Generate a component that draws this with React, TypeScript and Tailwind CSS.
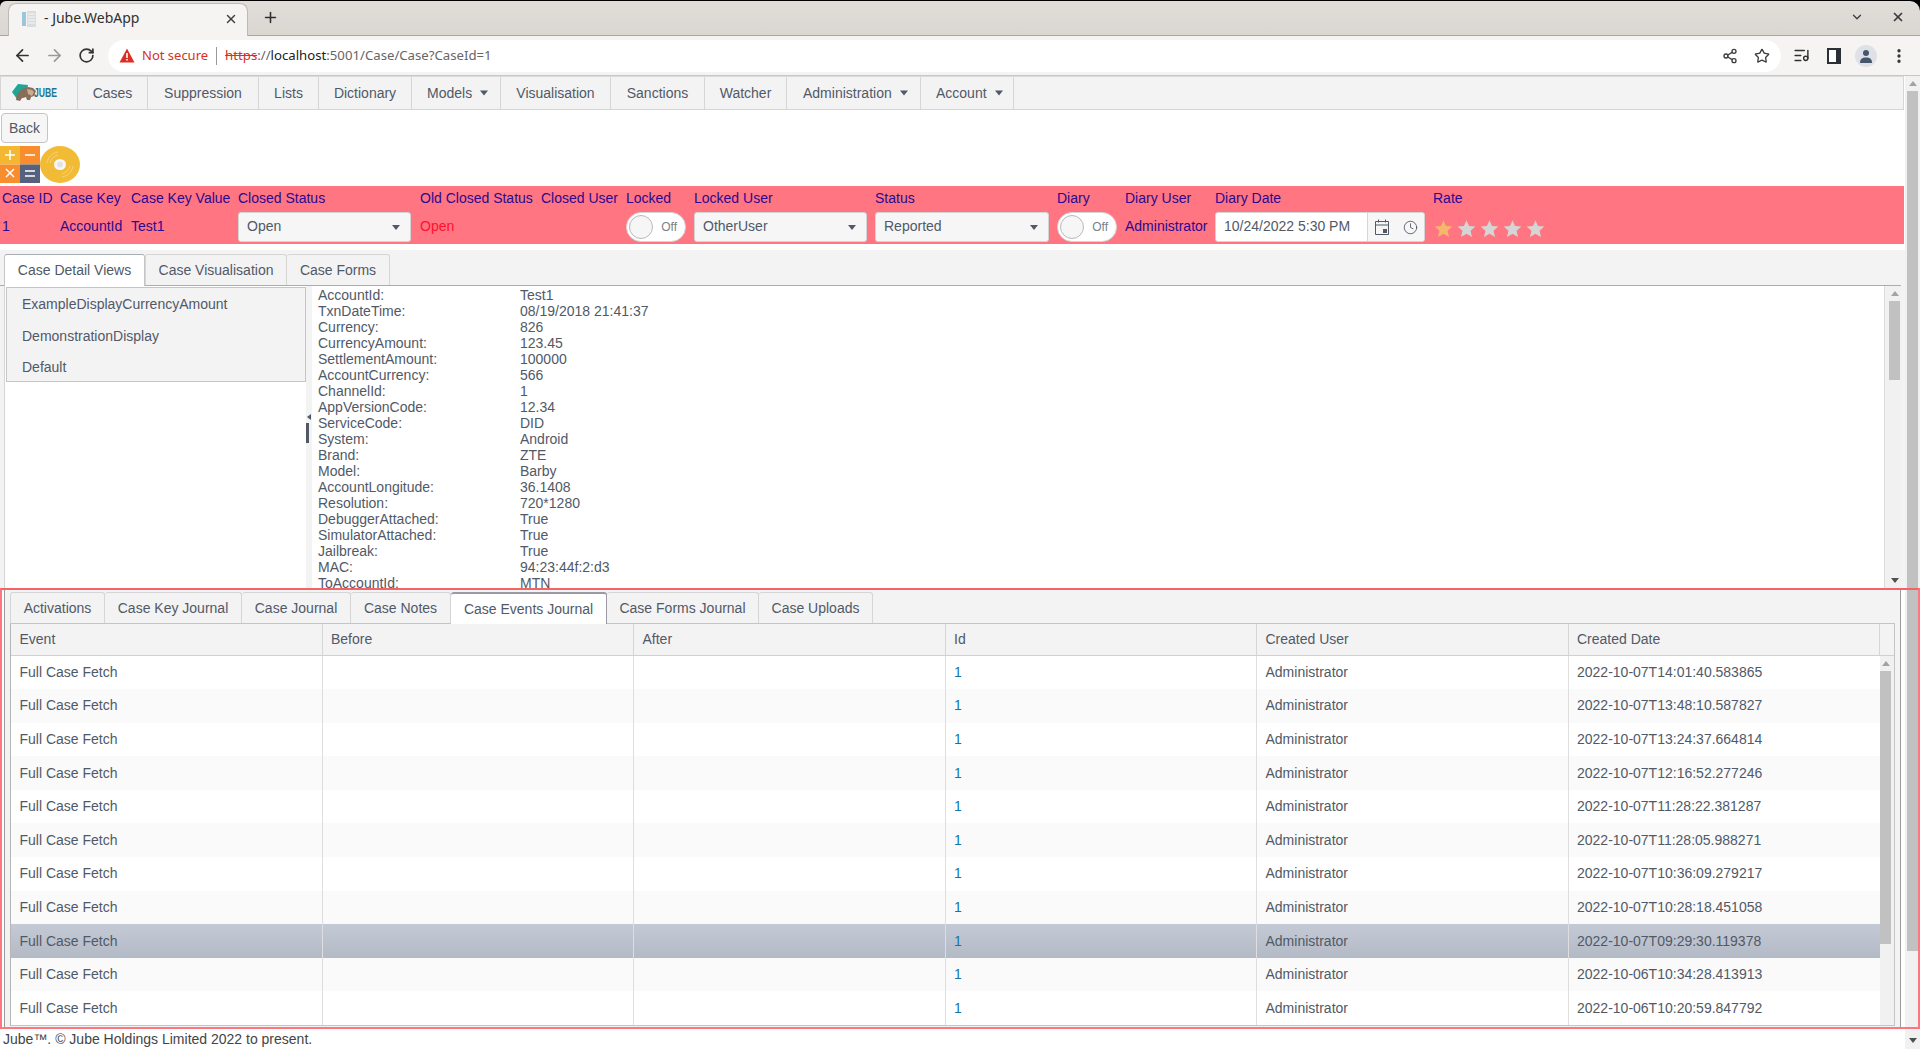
import React from "react";
import { ArrowLeft, ArrowRight, RotateCw, Share2, Star, ListMusic, EllipsisVertical, ChevronDown, X, Plus, Clock } from "lucide-react";

const Caret = ({ c = "#515967", w = 8, h = 5 }: { c?: string; w?: number; h?: number }) => (
  <svg width={w} height={h} viewBox="0 0 8 5" className="shrink-0"><path d="M0 0h8L4 5z" fill={c} /></svg>
);

const UpArrow = () => (
  <svg width="8" height="5" viewBox="0 0 8 5"><path d="M0 5h8L4 0z" fill="#a3a3a3" /></svg>
);

const DownArrow = () => (
  <svg width="8" height="5" viewBox="0 0 8 5"><path d="M0 0h8L4 5z" fill="#505050" /></svg>
);

const navItems: { t: string; w: number; caret?: boolean }[] = [
  { t: "Cases", w: 70 },
  { t: "Suppression", w: 111 },
  { t: "Lists", w: 60 },
  { t: "Dictionary", w: 93 },
  { t: "Models", w: 89, caret: true },
  { t: "Visualisation", w: 110 },
  { t: "Sanctions", w: 94 },
  { t: "Watcher", w: 82 },
  { t: "Administration", w: 134, caret: true },
  { t: "Account", w: 93, caret: true },
];

const details: [string, string][] = [
  ["AccountId:", "Test1"],
  ["TxnDateTime:", "08/19/2018 21:41:37"],
  ["Currency:", "826"],
  ["CurrencyAmount:", "123.45"],
  ["SettlementAmount:", "100000"],
  ["AccountCurrency:", "566"],
  ["ChannelId:", "1"],
  ["AppVersionCode:", "12.34"],
  ["ServiceCode:", "DID"],
  ["System:", "Android"],
  ["Brand:", "ZTE"],
  ["Model:", "Barby"],
  ["AccountLongitude:", "36.1408"],
  ["Resolution:", "720*1280"],
  ["DebuggerAttached:", "True"],
  ["SimulatorAttached:", "True"],
  ["Jailbreak:", "True"],
  ["MAC:", "94:23:44f:2:d3"],
  ["ToAccountId:", "MTN"],
];

const dates = [
  "2022-10-07T14:01:40.583865",
  "2022-10-07T13:48:10.587827",
  "2022-10-07T13:24:37.664814",
  "2022-10-07T12:16:52.277246",
  "2022-10-07T11:28:22.381287",
  "2022-10-07T11:28:05.988271",
  "2022-10-07T10:36:09.279217",
  "2022-10-07T10:28:18.451058",
  "2022-10-07T09:29:30.119378",
  "2022-10-06T10:34:28.413913",
  "2022-10-06T10:20:59.847792",
];

const bottomTabs: [string, number][] = [
  ["Activations", 95],
  ["Case Key Journal", 137],
  ["Case Journal", 109],
  ["Case Notes", 100],
  ["Case Events Journal", 156],
  ["Case Forms Journal", 152],
  ["Case Uploads", 114],
];

const Select = ({ v, w }: { v: string; w: string }) => (
  <div className={`${w} h-[30px] flex items-center justify-between pl-2 pr-[10px] bg-[#f6f6f6] border border-[#d5d5d5] rounded-[3px] text-[#515967]`}>
    <span className="-mt-[2px]">{v}</span>
    <Caret />
  </div>
);

const Toggle = () => (
  <div className="w-[60px] h-[30px] flex items-center justify-between pl-[2px] pr-2 bg-white border border-[#d5d5d5] rounded-full text-[12px] text-[#7a7f88]">
    <div className="w-[24px] h-[24px] rounded-full bg-[#f6f6f6] border border-[#b9b9b9]" />
    <span>Off</span>
  </div>
);

const Lbl = ({ children }: { children: React.ReactNode }) => (
  <div className="h-[24px] flex items-center text-[#2b0a8f] whitespace-nowrap">{children}</div>
);

const Val = ({ children, red }: { children?: React.ReactNode; red?: boolean }) => (
  <div className={`h-[34px] flex items-center pb-[1px] whitespace-nowrap ${red ? "text-[#ff1030]" : "text-[#2b0a8f]"}`}>{children}</div>
);

const Col = ({ w, label, children }: { w: string; label: string; children?: React.ReactNode }) => (
  <div className={`${w} shrink-0 flex flex-col`}>
    <Lbl>{label}</Lbl>
    {children}
  </div>
);

export default function App() {
  return (
    <div className="relative w-[1920px] h-[1049px] overflow-hidden bg-white flex flex-col text-[14px] text-[#515967] font-['Liberation_Sans',sans-serif]">
      {/* browser chrome */}
      <div className="h-[76px] shrink-0 flex flex-col bg-black font-['Noto_Sans',sans-serif]">
        <div className="h-[35px] mt-px shrink-0 flex items-end rounded-tr-[10px] rounded-tl-[6px] bg-gradient-to-b from-[#e1deda] to-[#dad7d1] border-b border-[#a9a69f] pl-2">
          <div className="w-[240px] h-[33px] -mb-px bg-[#f5f4f2] rounded-t-[8px] border border-b-0 border-[#bdbab4] flex items-center pl-[12px] pr-[9px] text-[#303030] text-[14px]">
            <svg width="16" height="16" viewBox="0 0 16 16" className="mr-[7px] shrink-0 -mt-[3px]">
              <rect x="1" y="1" width="4" height="14" fill="#9cc6dc" />
              <rect x="6" y="0" width="9" height="16" fill="#d9dde0" />
              <path d="M7 3h7M7 6h7M7 9h7M7 12h7" stroke="#f5f5f5" strokeWidth="1" />
            </svg>
            <span className="flex-1 whitespace-nowrap -mt-[6px]">- Jube.WebApp</span>
            <X size={14} strokeWidth={2.4} color="#3c3c3c" className="-mt-[3px]" />
          </div>
          <div className="w-[44px] h-[33px] flex items-center justify-center">
            <Plus size={17} strokeWidth={2.2} color="#303030" className="-mt-[3px]" />
          </div>
          <div className="flex-1" />
          <div className="h-[33px] flex items-center gap-[27px] pr-[15px]">
            <ChevronDown size={14} strokeWidth={2.2} color="#3c3c3c" className="-mt-[3px]" />
            <X size={14} strokeWidth={3} color="#3c3c3c" className="-mt-[3px]" />
          </div>
        </div>
        <div className="flex-1 bg-[#f5f4f2] flex items-center border-b border-[#c9c5c9] pl-[13px] pr-[12px]">
          <ArrowLeft size={19} strokeWidth={2.2} color="#333" />
          <ArrowRight size={19} strokeWidth={2.2} color="#9a9a9a" className="ml-[13px]" />
          <RotateCw size={17} strokeWidth={2.4} color="#333" className="ml-[14px]" />
          <div className="ml-[13px] w-[1673px] h-[32px] bg-white rounded-full flex items-center pl-[11px] pr-[11px]">
            <svg width="16" height="15" viewBox="0 0 16 15" className="shrink-0">
              <path d="M8 0.500L15.500 14.500H0.500z" fill="#d93025" />
              <path d="M7.200 5h1.600v5H7.200zM7.200 11h1.600v1.600H7.200z" fill="#fff" />
            </svg>
            <span className="ml-[7px] text-[#d93025] text-[13px] whitespace-nowrap">Not secure</span>
            <div className="mx-[8px] w-px h-[18px] bg-[#9a9a9a]" />
            <span className="text-[13.2px] whitespace-nowrap text-[#666]">
              <span className="line-through text-[#d93025]">https</span>://<span className="text-[#202020]">localhost</span>:5001/Case/Case?CaseId=1
            </span>
            <div className="flex-1" />
            <Share2 size={16} strokeWidth={2} color="#3c3c3c" />
            <Star size={16} strokeWidth={2} color="#3c3c3c" className="ml-[16px]" />
          </div>
          <ListMusic size={17} strokeWidth={2} color="#303030" className="ml-[12px]" />
          <svg width="14" height="16" viewBox="0 0 14 16" className="ml-[17px]">
            <rect width="14" height="16" fill="#2b3036" />
            <rect x="2" y="2" width="7" height="12" fill="#fff" />
          </svg>
          <div className="ml-[14px] w-[22px] h-[22px] rounded-full bg-[#dfe1e6] flex items-center justify-center">
            <svg width="14" height="14" viewBox="0 0 14 14">
              <circle cx="7" cy="4" r="3" fill="#46566b" />
              <path d="M1 14c0-4 2-5.500 6-5.500s6 1.500 6 5.500z" fill="#46566b" />
            </svg>
          </div>
          <EllipsisVertical size={18} strokeWidth={2.4} color="#333" className="ml-[13px]" />
        </div>
      </div>

      <div className="flex-1 min-h-0 flex">
        {/* page */}
        <div className="w-[1905px] shrink-0 flex flex-col">
          {/* nav */}
          <div className="h-[34px] shrink-0 flex bg-[#f3f3f4] border border-t-[#dcdcdc] border-[#d5d5d5] mr-px">
            <div className="w-[77px] shrink-0 border-r border-[#d5d5d5] flex items-center pl-[10px]">
              <svg width="26" height="20" viewBox="0 0 26 20" className="shrink-0">
                <path d="M1 9L7 1l10 1-2 12-9 2z" fill="#1fa696" />
                <path d="M5 17l1-6 5-5 6-2 5 1 3 3-2 5-3 1-1 3h-3l-1-3-4 1-2 3z" fill="#8a6d57" />
                <path d="M16 6l5 1 2 2-2 4-4-2z" fill="#c9ad92" />
              </svg>
              <span className="-ml-[3px] text-[12px] font-bold text-[#23758d] scale-x-[0.72] origin-left leading-none">JUBE</span>
            </div>
            {navItems.map((n) => (
              <div
                key={n.t}
                style={{ width: n.w }}
                className={`shrink-0 border-r border-[#d5d5d5] flex items-center gap-[8px] whitespace-nowrap ${n.caret ? (n.t === "Administration" ? "pl-[16px]" : "pl-[15px]") : "justify-center"}`}
              >
                {n.t}
                {n.caret && <Caret w={8} h={6} />}
              </div>
            ))}
          </div>

          {/* back */}
          <div className="pt-[3px] pl-px shrink-0">
            <div className="w-[47px] h-[30px] flex items-center justify-center bg-[#f6f6f6] border border-[#c5c5c5] rounded-[4px]">Back</div>
          </div>

          {/* icons */}
          <div className="h-[37px] mt-[3px] shrink-0 flex">
            <svg width="40" height="37" viewBox="0 0 40 37">
              <rect width="20" height="18.500" fill="#f4b731" />
              <rect x="20" width="20" height="18.500" fill="#f78d2d" />
              <rect y="18.500" width="20" height="18.500" fill="#f78d2d" />
              <rect x="20" y="18.500" width="20" height="18.500" fill="#56627d" />
              <path d="M5 9h10M10 4v10M25 9h10M6 23l8 8M14 23l-8 8M25 25h10M25 30h10" stroke="#fff" strokeWidth="1.500" />
            </svg>
            <svg width="40" height="37" viewBox="0 0 40 37">
              <ellipse cx="20" cy="18.500" rx="20" ry="18.500" fill="#f2bb36" />
              <path d="M7 17c1-6 5-10 11-11M10 17c1-4 4-7 8-8M33 20c-1 6-5 10-11 11M30 20c-1 4-4 7-8 8" stroke="#f7d27a" strokeWidth="1" fill="none" />
              <ellipse cx="20" cy="18.500" rx="6" ry="5.500" fill="#f7f7f7" />
              <ellipse cx="20" cy="18.500" rx="3" ry="3" fill="#e3e3e3" />
            </svg>
          </div>

          {/* pink */}
          <div className="h-[58px] mt-[3px] shrink-0 bg-[#ff7581] flex pl-[2px] mr-px">
            <Col w="w-[58px]" label="Case ID"><Val>1</Val></Col>
            <Col w="w-[71px]" label="Case Key"><Val>AccountId</Val></Col>
            <Col w="w-[107px]" label="Case Key Value"><Val>Test1</Val></Col>
            <Col w="w-[182px]" label="Closed Status"><div className="pt-[2px]"><Select v="Open" w="w-[173px]" /></div></Col>
            <Col w="w-[121px]" label="Old Closed Status"><Val red>Open</Val></Col>
            <Col w="w-[85px]" label="Closed User"><Val /></Col>
            <Col w="w-[68px]" label="Locked"><div className="pt-[2px]"><Toggle /></div></Col>
            <Col w="w-[181px]" label="Locked User"><div className="pt-[2px]"><Select v="OtherUser" w="w-[173px]" /></div></Col>
            <Col w="w-[182px]" label="Status"><div className="pt-[2px]"><Select v="Reported" w="w-[174px]" /></div></Col>
            <Col w="w-[68px]" label="Diary"><div className="pt-[2px]"><Toggle /></div></Col>
            <Col w="w-[90px]" label="Diary User"><Val>Administrator</Val></Col>
            <Col w="w-[218px]" label="Diary Date">
              <div className="mt-[2px] w-[210px] h-[30px] flex bg-white border border-[#d5d5d5] rounded-[3px]">
                <div className="w-[152px] flex items-center pl-2 border-r border-[#d5d5d5] whitespace-nowrap"><span className="-mt-[2px]">10/24/2022 5:30 PM</span></div>
                <div className="flex-1 bg-[#f6f6f6] flex items-center pl-[7px] gap-[14px] rounded-r-[3px]">
                  <svg width="14" height="16" viewBox="0 0 14 16">
                    <path d="M.5 2.500h13v13H.5zM.5 6h13M3.500 .5v3M10.500 .5v3" stroke="#515967" strokeWidth="1" fill="none" />
                    <rect x="8" y="10" width="4" height="4" fill="#515967" />
                  </svg>
                  <Clock size={15} strokeWidth={1.4} color="#515967" />
                </div>
              </div>
            </Col>
            <Col w="w-[200px]" label="Rate">
              <div className="flex pt-[9px] pl-[1px] gap-[4px]">
                {[0, 1, 2, 3, 4].map((i) => (
                  <svg key={i} width="19" height="19" viewBox="0 0 24 24">
                    <path d="M12 1.500l3.200 7.400 8 .7-6.100 5.300 1.900 7.900L12 18.600l-7 4.200 1.900-7.900L.8 9.600l8-.7z" fill={i === 0 ? "#f4b76c" : "#d5d5d5"} />
                  </svg>
                ))}
              </div>
            </Col>
          </div>

          {/* top tabs panel */}
          <div className="h-[338px] mt-[6px] shrink-0 flex flex-col bg-[#f3f3f4]">
            <div className="h-[36px] shrink-0 flex items-end pl-[4px] border-b border-[#a9abb5] mr-[4px]">
              <div className="w-[141px] h-[32px] -mb-px flex items-center justify-center bg-white border border-b-0 border-[#c5c5c5] border-t-[#a9abb5] rounded-t-[3px]">Case Detail Views</div>
              <div className="w-[142px] h-[31px] flex items-center justify-center border border-b-0 border-[#d5d5d5] rounded-t-[3px]">Case Visualisation</div>
              <div className="w-[103px] h-[31px] flex items-center justify-center border border-b-0 border-l-0 border-[#d5d5d5] rounded-t-[3px]">Case Forms</div>
            </div>
            <div className="flex-1 min-h-0 flex bg-white ml-[4px] mr-[4px] border-l border-[#d5d5d5]">
              <div className="w-[301px] shrink-0 pl-[1px] pt-[1px]">
                <div className="h-[95px] bg-[#f3f3f4] border border-[#c5c5c5] flex flex-col pl-[15px] pt-[1px] overflow-hidden">
                  <div className="h-[31.5px] shrink-0 flex items-center">ExampleDisplayCurrencyAmount</div>
                  <div className="h-[31.5px] shrink-0 flex items-center">DemonstrationDisplay</div>
                  <div className="h-[31.5px] shrink-0 flex items-center">Default</div>
                </div>
              </div>
              <div className="w-[6px] shrink-0 bg-[#f3f3f4] flex flex-col pt-[128px]">
                <svg width="4" height="6" viewBox="0 0 4 6" className="ml-px"><path d="M4 0v6L0 3z" fill="#515967" /></svg>
                <div className="w-[3px] h-[20px] mt-[3px] bg-[#515967]" />
              </div>
              <div className="flex-1 min-w-0 overflow-hidden pl-[6px] pt-[1px]">
                {details.map(([k, v]) => (
                  <div key={k} className="h-[16px] flex leading-[16px] whitespace-nowrap">
                    <span className="w-[202px] shrink-0">{k}</span>
                    <span>{v}</span>
                  </div>
                ))}
              </div>
              <div className="w-[17px] shrink-0 bg-[#f1f1f1] border-l border-[#dcdcdc] flex flex-col items-center pl-[3px] overflow-hidden">
                <div className="h-[15px] flex items-center"><UpArrow /></div>
                <div className="w-[11px] h-[79px] bg-[#c1c1c1]" />
                <div className="flex-1" />
                <div className="h-[14px] flex items-center mb-[1px]"><DownArrow /></div>
              </div>
            </div>
          </div>

          {/* bottom panel */}
          <div className="flex-1 min-h-0 ml-[4px] mr-[4px] border-x border-[#9b9b9b] bg-[#f3f3f4] px-[5px] pt-[4px] overflow-hidden">
            <div className="h-[32px] flex items-end border-b border-[#c5c5c5]">
              {bottomTabs.map(([t, w]) => {
                const on = t === "Case Events Journal";
                return (
                  <div
                    key={t}
                    style={{ width: w }}
                    className={`h-[31px] flex items-center justify-center border-r border-l-0 first:border-l border-[#d5d5d5] rounded-t-[3px] whitespace-nowrap border-t ${on ? "-mb-px h-[32px] bg-white border-t-[#9a9aa5] border-t-2 border-x border-x-[#9a9aa5]" : ""}`}
                  >
                    {t}
                  </div>
                );
              })}
            </div>
            <div className="border border-t-0 border-[#c5c5c5] border-l-[#b5b5b5] bg-white">
              <div className="h-[31.5px] flex bg-[#f3f3f4] border-b border-[#d0d0d5]">
                {["Event", "Before", "After", "Id", "Created User", "Created Date"].map((h) => (
                  <div key={h} className="w-[311.5px] shrink-0 border-r border-[#d5d5d5] pl-[8.5px] flex items-center">{h}</div>
                ))}
                <div className="flex-1" />
              </div>
              <div className="flex">
                <div className="flex flex-col">
                  {dates.map((d, i) => (
                    <div
                      key={d}
                      className={`h-[33.6px] flex ${i === 8 ? "bg-gradient-to-b from-[#c4cad5] to-[#b2bac6]" : i % 2 === 1 ? "bg-[#fafafa]" : "bg-white"}`}
                    >
                      <div className="w-[311.5px] shrink-0 border-r border-[#dedede] pl-[8.5px] flex items-center whitespace-nowrap">Full Case Fetch</div>
                      <div className="w-[311.5px] shrink-0 border-r border-[#dedede]" />
                      <div className="w-[311.5px] shrink-0 border-r border-[#dedede]" />
                      <div className="w-[311.5px] shrink-0 border-r border-[#dedede] pl-[8.5px] flex items-center text-[#1274ac]">1</div>
                      <div className="w-[311.5px] shrink-0 border-r border-[#dedede] pl-[8.5px] flex items-center">Administrator</div>
                      <div className="w-[311.5px] shrink-0 pl-[8.5px] flex items-center whitespace-nowrap">{d}</div>
                    </div>
                  ))}
                </div>
                <div className="flex-1 bg-[#f1f1f1] flex flex-col items-center pr-[3px]">
                  <div className="h-[15px] flex items-center"><UpArrow /></div>
                  <div className="w-[11px] h-[273px] bg-[#c1c1c1]" />
                </div>
              </div>
            </div>
          </div>

          {/* footer */}
          <div className="h-[20px] shrink-0 pl-[3px] flex items-center text-[#444] bg-white">Jube™. © Jube Holdings Limited 2022 to present.</div>
        </div>

        {/* page scrollbar */}
        <div className="w-[15px] shrink-0 bg-[#f1f1f1] flex flex-col items-center overflow-hidden">
          <div className="h-[15px] flex items-center"><UpArrow /></div>
          <div className="w-[11px] h-[860px] bg-[#c1c1c1]" />
          <div className="flex-1" />
          <div className="h-[15px] flex items-center mb-px"><DownArrow /></div>
        </div>
      </div>

      {/* annotation rectangle drawn over the shot */}
      <div className="absolute left-0 right-0 top-[588px] h-[441px] border-2 border-[#ff7680] border-t-[#f26468] pointer-events-none" />
    </div>
  );
}
